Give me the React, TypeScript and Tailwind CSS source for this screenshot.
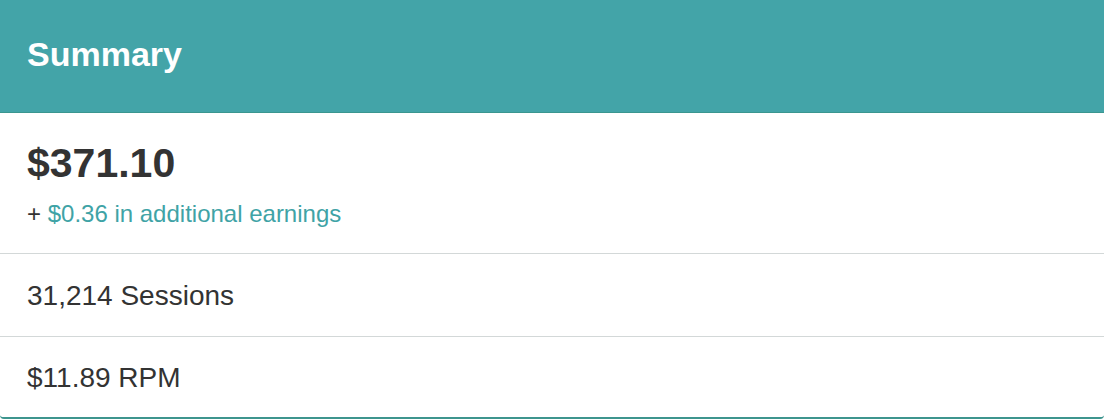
export default function App() {
  return (
    <div className="w-[1104px] h-[420px] bg-white" style={{ fontFamily: '"Liberation Sans", Arial, sans-serif' }}>
      <div className="border-b-2 border-[#3d958e] rounded-b-[4px] overflow-hidden">
        {/* Header */}
        <div className="h-[113px] bg-[#43a4a8] border-b border-[#3a968f] px-[27px] pt-[37px]">
          <h2 className="text-[34px] leading-none font-bold text-white">Summary</h2>
        </div>

        {/* Earnings */}
        <div className="h-[141px] border-b border-[#d3d8d8] px-[27px] pt-[30px]">
          <div className="text-[41px] leading-none font-bold text-[#333]">$371.10</div>
          <div className="mt-[18px] text-[24px] leading-none text-[#333]">
            + <span className="text-[#3fa3a6]">$0.36 in additional earnings</span>
          </div>
        </div>

        <div className="h-[83px] border-b border-[#d3d8d8] px-[27px] pt-[28px]">
          <div className="text-[28px] leading-none text-[#333]">31,214 Sessions</div>
        </div>

        <div className="h-[80px] px-[27px] pt-[27px]">
          <div className="text-[28px] leading-none text-[#333]">$11.89 RPM</div>
        </div>
      </div>
    </div>
  );
}
